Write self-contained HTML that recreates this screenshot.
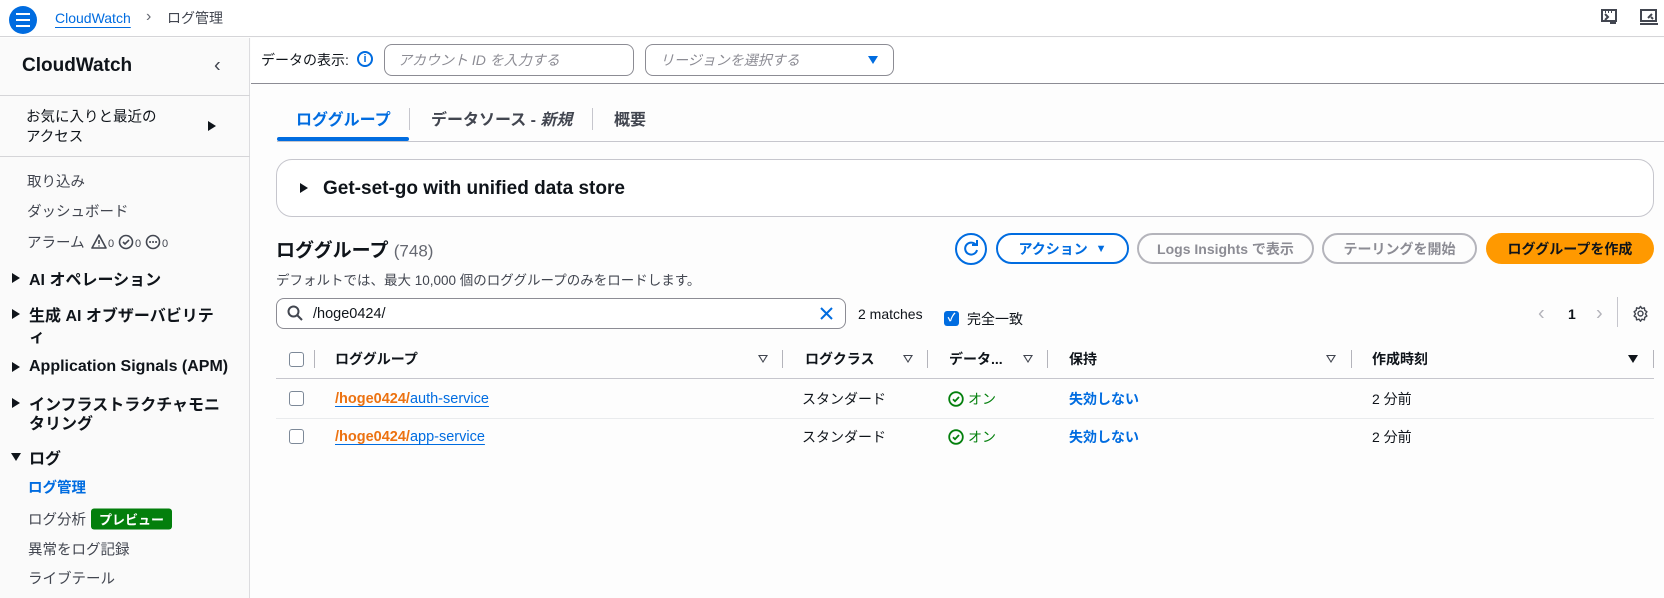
<!DOCTYPE html>
<html><head><meta charset="utf-8"><style>
*{box-sizing:border-box;margin:0;padding:0}
body{width:1664px;height:593px;overflow:hidden;background:#fdfdfd;font-family:"Liberation Sans","Noto Sans CJK JP",sans-serif;color:#0f141a;font-size:14.5px;position:relative}
.a{position:absolute;white-space:nowrap}
.c{transform:translateY(-50%)}
.b{font-weight:bold}
.blue{color:#006ce0}
.tri{width:0;height:0;border-top:5px solid transparent;border-bottom:5px solid transparent;border-left:8px solid #0f141a}
.trid{width:0;height:0;border-left:5px solid transparent;border-right:5px solid transparent;border-top:8px solid #0f141a}
.btn{position:absolute;top:233px;height:31px;border-radius:16px;border:2px solid #b4b4bb;color:#8c8c94;font-weight:bold;font-size:14px;display:flex;align-items:center;justify-content:center}
.cb{position:absolute;width:15px;height:15px;border:1.5px solid #7d8998;border-radius:3px;background:#fff}
.hd{position:absolute;top:359px;transform:translateY(-50%);font-size:14px;font-weight:bold;color:#0f141a}
.dv{position:absolute;top:350px;width:1px;height:18px;background:#b4b4bb}
.ft{position:absolute;top:355px;width:0;height:0;border-left:5px solid transparent;border-right:5px solid transparent;border-top:8px solid #424650}
.ft:after{content:"";position:absolute;left:-3px;top:-7px;border-left:3px solid transparent;border-right:3px solid transparent;border-top:5px solid #fff}
.ok{display:flex;align-items:center;gap:4px}
</style></head><body>
<!-- top bar -->
<div class="a" style="left:0;top:0;width:1664px;height:37px;background:#fff;border-bottom:1px solid #d5d5d8"></div>
<div class="a" style="left:9px;top:6px;width:28px;height:28px;border-radius:50%;background:#006ce0"></div>
<div class="a" style="left:16px;top:13px;width:14px;height:2px;background:#fff;box-shadow:0 6px 0 #fff,0 12px 0 #fff"></div>
<div class="a c blue" style="left:55px;top:18px;font-size:14px;text-decoration:underline;text-underline-offset:4px">CloudWatch</div>
<div class="a c" style="left:146px;top:17px;color:#656871;font-size:16px">&#x203A;</div>
<div class="a c" style="left:167px;top:18px;font-size:14px;color:#424650">ログ管理</div>
<svg class="a" style="left:1600px;top:8px" width="20" height="18" viewBox="0 0 20 18"><rect x="2" y="2" width="14" height="11" fill="none" stroke="#424650" stroke-width="2"/><path d="M5 6l3 3-3 3M10 15h6" stroke="#424650" stroke-width="2" fill="none"/><path d="M5 4h1M8 4h1M11 4h1" stroke="#424650" stroke-width="2"/></svg>
<svg class="a" style="left:1639px;top:8px" width="20" height="18" viewBox="0 0 20 18"><rect x="2" y="2" width="15" height="11" fill="none" stroke="#424650" stroke-width="2"/><path d="M1 16h18M9 10l4-4M12 9l2 2" stroke="#424650" stroke-width="2" fill="none"/></svg>

<!-- sidebar -->
<div class="a" style="left:0;top:38px;width:250px;height:560px;background:#fafafa;border-right:1px solid #dcdcdf"></div>
<div class="a c b" style="left:22px;top:66px;font-size:19px">CloudWatch</div>
<div class="a c" style="left:214px;top:66px;font-size:20px;color:#424650">&#x2039;</div>
<div class="a" style="left:0;top:95px;width:250px;height:1px;background:#d5d5d8"></div>
<div class="a c" style="left:26px;top:116px">お気に入りと最近の</div>
<div class="a c" style="left:26px;top:136px">アクセス</div>
<div class="a tri" style="left:208px;top:121px"></div>
<div class="a" style="left:0;top:156px;width:250px;height:1px;background:#d5d5d8"></div>
<div class="a c" style="left:27px;top:181px;color:#424650">取り込み</div>
<div class="a c" style="left:27px;top:211px;color:#424650">ダッシュボード</div>
<div class="a c" style="left:27px;top:242px;color:#424650">アラーム</div>
<svg class="a" style="left:91px;top:233px" width="100" height="18" viewBox="0 0 100 18">
<path d="M8 2L1 15h14z" fill="none" stroke="#424650" stroke-width="1.6" stroke-linejoin="round"/><path d="M8 7v4M8 12.5v1" stroke="#424650" stroke-width="1.6"/>
<text x="17" y="14" font-size="11" font-family="Liberation Sans" fill="#424650">0</text>
<circle cx="35" cy="9" r="6.5" fill="none" stroke="#424650" stroke-width="1.6"/><path d="M32 9l2 2 4-4" fill="none" stroke="#424650" stroke-width="1.6"/>
<text x="44" y="14" font-size="11" font-family="Liberation Sans" fill="#424650">0</text>
<circle cx="62" cy="9" r="6.5" fill="none" stroke="#424650" stroke-width="1.6"/><path d="M59 9h.1M62 9h.1M65 9h.1" stroke="#424650" stroke-width="2" stroke-linecap="round"/>
<text x="71" y="14" font-size="11" font-family="Liberation Sans" fill="#424650">0</text></svg>
<div class="a tri" style="left:12px;top:273px"></div><div class="a c b" style="left:29px;top:278px;font-size:16px">AI オペレーション</div>
<div class="a tri" style="left:12px;top:309px"></div><div class="a c b" style="left:29px;top:314px;font-size:16px">生成 AI オブザーバビリテ</div>
<div class="a c b" style="left:29px;top:335px;font-size:16px">ィ</div>
<div class="a tri" style="left:12px;top:362px"></div><div class="a c b" style="left:29px;top:367px;font-size:16px">Application Signals (APM)</div>
<div class="a tri" style="left:12px;top:398px"></div><div class="a c b" style="left:29px;top:403px;font-size:16px">インフラストラクチャモニ</div>
<div class="a c b" style="left:29px;top:422px;font-size:16px">タリング</div>
<div class="a trid" style="left:11px;top:453px"></div><div class="a c b" style="left:29px;top:457px;font-size:16px">ログ</div>
<div class="a c b blue" style="left:28px;top:487px">ログ管理</div>
<div class="a c" style="left:28px;top:519px;color:#424650">ログ分析</div>
<div class="a c" style="left:91px;top:519px;background:#037f0c;color:#fff;font-size:13px;font-weight:bold;padding:1px 8px;border-radius:3px">プレビュー</div>
<div class="a c" style="left:28px;top:549px;color:#424650">異常をログ記録</div>
<div class="a c" style="left:28px;top:578px;color:#424650">ライブテール</div>

<!-- filter bar -->
<div class="a" style="left:251px;top:38px;width:1413px;height:46px;background:#fff;border-bottom:1px solid #8c8c94"></div>
<div class="a c" style="left:261px;top:60px;font-size:14px">データの表示:</div>
<div class="a" style="left:357px;top:51px;width:16px;height:16px;border:2px solid #006ce0;border-radius:50%;color:#006ce0;font-size:11px;font-weight:bold;text-align:center;line-height:12px">i</div>
<div class="a" style="left:384px;top:44px;width:250px;height:32px;border:1px solid #8c8c94;border-radius:8px;background:#fff"></div>
<div class="a c" style="left:398px;top:60px;color:#8c8c94;font-style:italic;font-size:14px">アカウント ID を入力する</div>
<div class="a" style="left:645px;top:44px;width:249px;height:32px;border:1px solid #8c8c94;border-radius:8px;background:#fff"></div>
<div class="a c" style="left:660px;top:60px;color:#8c8c94;font-style:italic;font-size:14px">リージョンを選択する</div>
<div class="a" style="left:868px;top:56px;border-left:5px solid transparent;border-right:5px solid transparent;border-top:8px solid #006ce0"></div>

<!-- tabs -->
<div class="a c b blue" style="left:296px;top:118px;font-size:16px">ロググループ</div>
<div class="a" style="left:277px;top:137px;width:132px;height:4px;background:#006ce0;border-radius:2px"></div>
<div class="a" style="left:409px;top:108px;width:1px;height:22px;background:#c6c6cd"></div>
<div class="a c b" style="left:431px;top:118px;font-size:16px;color:#424650">データソース - <i>新規</i></div>
<div class="a" style="left:592px;top:108px;width:1px;height:22px;background:#c6c6cd"></div>
<div class="a c b" style="left:614px;top:118px;font-size:16px;color:#424650">概要</div>
<div class="a" style="left:277px;top:141px;width:1387px;height:1px;background:#c6c6cd"></div>

<!-- expandable -->
<div class="a" style="left:276px;top:159px;width:1378px;height:58px;border:1px solid #c6c6cd;border-radius:16px;background:#fff"></div>
<div class="a tri" style="left:300px;top:183px"></div>
<div class="a c b" style="left:323px;top:189px;font-size:19px">Get-set-go with unified data store</div>

<!-- header -->
<div class="a c b" style="left:276px;top:249px;font-size:19px">ロググループ <span style="font-weight:normal;color:#656871;font-size:17px">(748)</span></div>
<div class="a c" style="left:276px;top:279px;font-size:13.5px;color:#424650">デフォルトでは、最大 10,000 個のロググループのみをロードします。</div>
<div class="a" style="left:955px;top:233px;width:32px;height:32px;border:2px solid #006ce0;border-radius:50%;background:#fff"></div>
<svg class="a" style="left:961px;top:239px" width="20" height="20" viewBox="0 0 20 20"><path d="M15 6A6 6 0 1 0 16 11" fill="none" stroke="#006ce0" stroke-width="2"/><path d="M11 6h5V1" fill="none" stroke="#006ce0" stroke-width="2"/></svg>
<div class="btn" style="left:996px;width:133px;border-color:#006ce0;color:#006ce0;background:#fff">アクション&nbsp;&nbsp;<span style="font-size:11px">▼</span></div>
<div class="btn" style="left:1137px;width:177px">Logs Insights で表示</div>
<div class="btn" style="left:1322px;width:155px">テーリングを開始</div>
<div class="btn" style="left:1486px;width:168px;border:none;background:#ff9900;color:#0f141a">ロググループを作成</div>

<!-- search -->
<div class="a" style="left:276px;top:298px;width:570px;height:31px;border:1px solid #8c8c94;border-radius:8px;background:#fff"></div>
<svg class="a" style="left:287px;top:305px" width="16" height="16" viewBox="0 0 16 16"><circle cx="6.5" cy="6.5" r="5" fill="none" stroke="#424650" stroke-width="2"/><path d="M10 10l5 5" stroke="#424650" stroke-width="2"/></svg>
<div class="a c" style="left:313px;top:314px;font-size:14.5px">/hoge0424/</div>
<svg class="a" style="left:819px;top:306px" width="15" height="15" viewBox="0 0 15 15"><path d="M2 2l11 11M13 2L2 13" stroke="#006ce0" stroke-width="2"/></svg>
<div class="a c" style="left:858px;top:314px;font-size:14px">2 matches</div>
<div class="a" style="left:944px;top:311px;width:15px;height:15px;border-radius:3px;background:#006ce0;color:#fff;font-size:11px;text-align:center;line-height:15px;font-weight:bold">✓</div>
<div class="a c" style="left:967px;top:319px;font-size:14px">完全一致</div>
<div class="a c" style="left:1538px;top:314px;color:#b4b4bb;font-size:20px">&#x2039;</div>
<div class="a c b" style="left:1568px;top:314px;font-size:14px">1</div>
<div class="a c" style="left:1596px;top:314px;color:#b4b4bb;font-size:20px">&#x203A;</div>
<div class="a" style="left:1617px;top:297px;width:1px;height:30px;background:#c6c6cd"></div>
<svg class="a" style="left:1632px;top:305px" width="17" height="17" viewBox="0 0 24 24"><path d="M12 2l2 3 3.5-1 .5 3.5 3 2-2 3 2 3-3 2-.5 3.5-3.5-1-2 3-2-3-3.5 1-.5-3.5-3-2 2-3-2-3 3-2 .5-3.5 3.5 1z" fill="none" stroke="#424650" stroke-width="2" stroke-linejoin="round"/><circle cx="12" cy="12" r="3.5" fill="none" stroke="#424650" stroke-width="2"/></svg>

<!-- table -->
<div class="cb" style="left:289px;top:352px"></div>
<div class="dv" style="left:314px"></div>
<div class="hd" style="left:335px">ロググループ</div>
<div class="ft" style="left:758px"></div><div class="dv" style="left:782px"></div>
<div class="hd" style="left:805px">ログクラス</div>
<div class="ft" style="left:903px"></div><div class="dv" style="left:927px"></div>
<div class="hd" style="left:949px">データ...</div>
<div class="ft" style="left:1023px"></div><div class="dv" style="left:1047px"></div>
<div class="hd" style="left:1069px">保持</div>
<div class="ft" style="left:1326px"></div><div class="dv" style="left:1351px"></div>
<div class="hd" style="left:1372px">作成時刻</div>
<div class="a" style="left:1628px;top:355px;border-left:5px solid transparent;border-right:5px solid transparent;border-top:8px solid #0f141a"></div>
<div class="dv" style="left:1653px"></div>
<div class="a" style="left:276px;top:378px;width:1378px;height:1px;background:#c6c6cd"></div>

<div class="cb" style="left:289px;top:391px"></div>
<div class="a c" style="left:335px;top:399px;font-size:14.5px;text-decoration:underline;text-decoration-color:#006ce0;text-underline-offset:3px"><b style="color:#ec7211">/hoge0424/</b><span class="blue">auth-service</span></div>
<div class="a c" style="left:802px;top:399px;font-size:14px">スタンダード</div>
<div class="a c ok" style="left:948px;top:399px;font-size:14px;color:#037f0c"><svg width="16" height="16" viewBox="0 0 16 16"><circle cx="8" cy="8" r="6.8" fill="none" stroke="#037f0c" stroke-width="1.8"/><path d="M5 8.2l2 2 4-4.2" fill="none" stroke="#037f0c" stroke-width="1.8"/></svg>オン</div>
<div class="a c b blue" style="left:1069px;top:399px;font-size:14px">失効しない</div>
<div class="a c" style="left:1372px;top:399px;font-size:14px">2 分前</div>
<div class="a" style="left:276px;top:418px;width:1378px;height:1px;background:#e9ebed"></div>

<div class="cb" style="left:289px;top:429px"></div>
<div class="a c" style="left:335px;top:437px;font-size:14.5px;text-decoration:underline;text-decoration-color:#006ce0;text-underline-offset:3px"><b style="color:#ec7211">/hoge0424/</b><span class="blue">app-service</span></div>
<div class="a c" style="left:802px;top:437px;font-size:14px">スタンダード</div>
<div class="a c ok" style="left:948px;top:437px;font-size:14px;color:#037f0c"><svg width="16" height="16" viewBox="0 0 16 16"><circle cx="8" cy="8" r="6.8" fill="none" stroke="#037f0c" stroke-width="1.8"/><path d="M5 8.2l2 2 4-4.2" fill="none" stroke="#037f0c" stroke-width="1.8"/></svg>オン</div>
<div class="a c b blue" style="left:1069px;top:437px;font-size:14px">失効しない</div>
<div class="a c" style="left:1372px;top:437px;font-size:14px">2 分前</div>
</body></html>
